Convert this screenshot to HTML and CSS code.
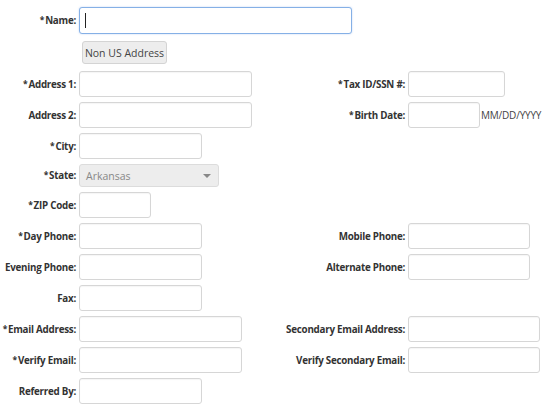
FILE: index.html
```html
<!DOCTYPE html>
<html>
<head>
<meta charset="utf-8">
<link rel="stylesheet" href="styles.css">
</head>
<body>
<form class="form">
  <label class="lbl"><span class="req">*</span>Name:</label>
  <div class="field span3"><div class="focus-wrap"><input class="inp w-name focus" type="text"><span class="cursor"></span></div></div>

  <div class="lbl"></div>
  <div class="field span3"><button type="button" class="btn">Non US Address</button></div>

  <label class="lbl"><span class="req">*</span>Address 1:</label>
  <div class="field"><input class="inp w-addr" type="text"></div>
  <label class="lbl"><span class="req">*</span>Tax ID/SSN #:</label>
  <div class="field"><input class="inp w-tax" type="text"></div>

  <label class="lbl">Address 2:</label>
  <div class="field"><input class="inp w-addr" type="text"></div>
  <label class="lbl"><span class="req">*</span>Birth Date:</label>
  <div class="field"><input class="inp w-zip" type="text"><span class="hint">MM/DD/YYYY</span></div>

  <label class="lbl"><span class="req">*</span>City:</label>
  <div class="field span3"><input class="inp w-mid" type="text"></div>

  <label class="lbl"><span class="req">*</span>State:</label>
  <div class="field span3"><div class="select"><span>Arkansas</span><span class="caret"></span></div></div>

  <label class="lbl"><span class="req">*</span>ZIP Code:</label>
  <div class="field span3"><input class="inp w-zip" type="text"></div>

  <label class="lbl"><span class="req">*</span>Day Phone:</label>
  <div class="field"><input class="inp w-mid" type="text"></div>
  <label class="lbl">Mobile Phone:</label>
  <div class="field"><input class="inp w-phone" type="text"></div>

  <label class="lbl">Evening Phone:</label>
  <div class="field"><input class="inp w-mid" type="text"></div>
  <label class="lbl">Alternate Phone:</label>
  <div class="field"><input class="inp w-phone" type="text"></div>

  <label class="lbl">Fax:</label>
  <div class="field span3"><input class="inp w-mid" type="text"></div>

  <label class="lbl"><span class="req">*</span>Email Address:</label>
  <div class="field"><input class="inp w-email" type="text"></div>
  <label class="lbl">Secondary Email Address:</label>
  <div class="field"><input class="inp w-email2" type="text"></div>

  <label class="lbl"><span class="req">*</span>Verify Email:</label>
  <div class="field"><input class="inp w-email" type="text"></div>
  <label class="lbl">Verify Secondary Email:</label>
  <div class="field"><input class="inp w-email2" type="text"></div>

  <label class="lbl">Referred By:</label>
  <div class="field span3"><input class="inp w-mid" type="text"></div>
</form>
</body>
</html>
```
FILE: styles.css
```css
* { box-sizing: border-box; }
html, body { margin: 0; padding: 0; background: #fff; }
body {
  font-family: "Open Sans", "DejaVu Sans", sans-serif;
  font-size: 11px;
  color: #333;
}
.form {
  display: grid;
  grid-template-columns: 76px 200px 123px 1fr;
  column-gap: 3px;
  row-gap: 5px;
  padding-top: 7px;
}
.lbl {
  display: flex;
  align-items: center;
  justify-content: flex-end;
  font-weight: bold;
  white-space: nowrap;
  font-size: 9.8px;
  letter-spacing: -0.25px;
  color: #333;
}
.req { font-size: 8.5px; position: relative; top: -1px; margin-right: 1px; }
.field { display: flex; align-items: center; }
.span3 { grid-column: 2 / 5; }
.inp {
  height: 26px;
  border: 1px solid #d6d6d6;
  border-radius: 3px;
  box-shadow: inset 0 1px 1px rgba(0,0,0,0.04);
  background: #fff;
  padding: 0 4px;
  font: inherit;
  margin: 0;
  outline: none;
}
.focus-wrap { position: relative; display: flex; }
.focus { height: 27px; border-color: #85b0e6; box-shadow: 0 0 2px rgba(100,150,230,0.4); }
.cursor {
  position: absolute;
  left: 6px;
  top: 6px;
  width: 1px;
  height: 15px;
  background: #222;
}
.w-name { width: 273px; }
.w-addr { width: 173px; }
.w-mid { width: 123px; }
.w-zip { width: 72px; }
.w-tax { width: 97px; }
.w-phone { width: 122px; }
.w-email { width: 163px; }
.w-email2 { width: 132px; }
.hint { margin-left: 1px; font-size: 10px; letter-spacing: -0.2px; color: #444; }
.btn {
  margin: 2px 0 2px 3px;
  height: 23px;
  width: 85px;
  padding: 0;
  border: 1px solid #d4d4d4;
  border-radius: 3px;
  background: #ededed;
  color: #444;
  font-family: inherit;
  font-size: 10.5px;
}
.select {
  width: 140px;
  height: 23px;
  border: 1px solid #dcdcdc;
  border-radius: 3px;
  background: #ededed;
  color: #888;
  font-size: 10.5px;
  display: flex;
  align-items: center;
  justify-content: space-between;
  padding: 0 7px 0 6px;
}
.caret {
  width: 0; height: 0;
  border-left: 4px solid transparent;
  border-right: 4px solid transparent;
  border-top: 4px solid #888;
}
```
